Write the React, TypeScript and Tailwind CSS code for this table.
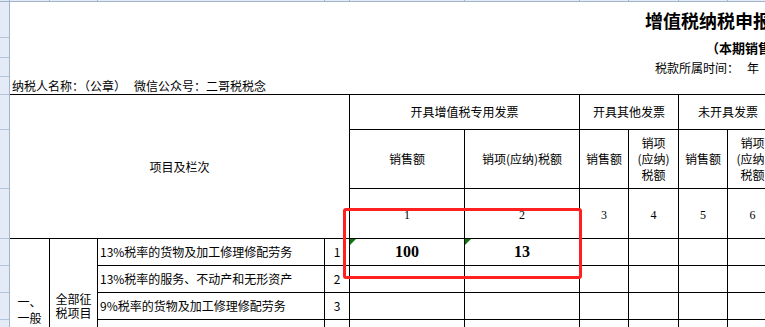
import React from 'react';

const cjk = { fontFamily: '"Noto Sans CJK SC", "Noto Sans", sans-serif' };
const serif = { fontFamily: '"Liberation Serif", "Noto Sans CJK SC", serif' };

const rowHeads = [36, 20, 19, 18, 35, 59, 50, 27, 27, 27, 27];
const colMarks = [40, 48, 227, 25, 115, 115, 49, 50, 49, 50];

const lines = [
  { row: 'row-start-4', desc: '13%税率的货物及加工修理修配劳务', no: '1', a: '100', b: '13' },
  { row: 'row-start-5', desc: '13%税率的服务、不动产和无形资产', no: '2', a: '', b: '' },
  { row: 'row-start-6', desc: '9%税率的货物及加工修理修配劳务', no: '3', a: '', b: '' },
  { row: 'row-start-7', desc: '9%税率的服务、不动产和无形资产', no: '4', a: '', b: '' },
  { row: 'row-start-8', desc: '6%税率', no: '5', a: '', b: '' },
];

const numCols = [
  { col: 'col-start-5', n: '1' },
  { col: 'col-start-6', n: '2' },
  { col: 'col-start-7', n: '3' },
  { col: 'col-start-8', n: '4' },
  { col: 'col-start-9', n: '5' },
  { col: 'col-start-10', n: '6' },
];

const Flag: React.FC = () => (
  <span className="absolute left-0 top-0 w-0 h-0 border-t-[6px] border-r-[6px] border-t-[#0b7a0b] border-r-transparent" />
);

const Cell: React.FC<{ className?: string; children?: React.ReactNode }> = ({ className = '', children }) => (
  <div className={`bg-white flex items-center justify-center text-[12px] text-black ${className}`}>{children}</div>
);

const App: React.FC = () => {
  return (
    <div className="relative w-[765px] h-[327px] overflow-hidden bg-white flex" style={cjk}>
      {/* row header strip */}
      <div className="w-[10px] shrink-0 flex flex-col bg-[#e4ebf6] border-r border-[#9fb5cd]">
        <div className="h-[2px] shrink-0 border-b border-[#9fb5cd] bg-[#dfe7f2]" />
        {rowHeads.map((h, i) => (
          <div key={i} className="shrink-0 border-b border-[#b3c5da]" style={{ height: h }} />
        ))}
      </div>

      <div className="flex-1 min-w-0 flex flex-col">
        {/* column header strip */}
        <div className="flex h-[2px] shrink-0">
          {colMarks.map((w, i) => (
            <div key={i} className="shrink-0 h-[2px] bg-[#e4ebf6] border-b border-r border-[#9fb5cd]" style={{ width: w }} />
          ))}
        </div>

        {/* title block */}
        <div className="h-[36px] shrink-0 flex items-center pl-[635px] whitespace-nowrap text-[18px] font-bold text-black">
          增值税纳税申报表附列资料（一）
        </div>
        <div className="h-[20px] shrink-0 flex items-center pl-[696px] whitespace-nowrap text-[13px] font-bold text-black">
          （本期销售情况明细）
        </div>
        <div className="h-[19px] shrink-0 flex items-center pl-[645px] whitespace-nowrap text-[12px] text-black">
          <span>税款所属时间：</span>
          <span className="ml-[8px]">年</span>
          <span className="ml-[24px]">月</span>
          <span className="ml-[24px]">日</span>
        </div>
        <div className="h-[17px] shrink-0 flex items-center pl-[2px] whitespace-nowrap text-[12px] text-black">
          <span>纳税人名称：（公章）</span>
          <span className="ml-[8px]">微信公众号：二哥税税念</span>
        </div>

        {/* form table */}
        <div className="grid grid-cols-[39px_47px_226px_24px_114px_114px_48px_49px_48px_49px] grid-rows-[34px_58px_49px_26px_26px_26px_26px_26px] gap-px bg-black border-t border-black w-max">
          <Cell className="col-start-1 col-span-4 row-start-1 row-span-3">项目及栏次</Cell>
          <Cell className="col-start-5 col-span-2 row-start-1">开具增值税专用发票</Cell>
          <Cell className="col-start-7 col-span-2 row-start-1">开具其他发票</Cell>
          <Cell className="col-start-9 col-span-2 row-start-1">未开具发票</Cell>

          <Cell className="col-start-5 row-start-2">销售额</Cell>
          <Cell className="col-start-6 row-start-2">销项(应纳)税额</Cell>
          <Cell className="col-start-7 row-start-2">销售额</Cell>
          <Cell className="col-start-8 row-start-2 flex-col leading-[16px]">
            <span>销项</span>
            <span>(应纳)</span>
            <span>税额</span>
          </Cell>
          <Cell className="col-start-9 row-start-2">销售额</Cell>
          <Cell className="col-start-10 row-start-2 flex-col leading-[16px]">
            <span>销项</span>
            <span>(应纳)</span>
            <span>税额</span>
          </Cell>

          {numCols.map((c) => (
            <div key={c.n} className={`${c.col} row-start-3 bg-white flex items-center justify-center pt-[3px] text-[12px] text-black`} style={serif}>
              {c.n}
            </div>
          ))}

          <div className="col-start-1 row-start-4 row-span-5 bg-white flex flex-col items-center pt-[55px] text-[12px] leading-[16px] text-black">
            <span>一、</span>
            <span>一般</span>
            <span>计税</span>
          </div>
          <Cell className="col-start-2 row-start-4 row-span-5 leading-[14px] text-center px-[5px]">全部征税项目</Cell>

          {lines.map((r) => (
            <React.Fragment key={r.no}>
              <div className={`${r.row} col-start-3 bg-white flex items-center pl-[2px] whitespace-nowrap text-[12px] text-black`}>
                {r.desc}
              </div>
              <Cell className={`${r.row} col-start-4`}>{r.no}</Cell>
              <div className={`${r.row} col-start-5 relative bg-white flex items-center justify-center text-[16px] font-bold text-black`} style={serif}>
                {r.a && <Flag />}
                {r.a}
              </div>
              <div className={`${r.row} col-start-6 relative bg-white flex items-center justify-center text-[16px] font-bold text-black`} style={serif}>
                {r.b && <Flag />}
                {r.b}
              </div>
              <Cell className={`${r.row} col-start-7`} />
              <Cell className={`${r.row} col-start-8`} />
              <Cell className={`${r.row} col-start-9`} />
              <Cell className={`${r.row} col-start-10`} />
            </React.Fragment>
          ))}
        </div>
      </div>

      {/* red highlight annotation */}
      <div className="absolute left-[343px] top-[208px] w-[239px] h-[71px] border-[3px] border-[#ff2020] rounded-[3px] pointer-events-none" />
    </div>
  );
};

export default App;
